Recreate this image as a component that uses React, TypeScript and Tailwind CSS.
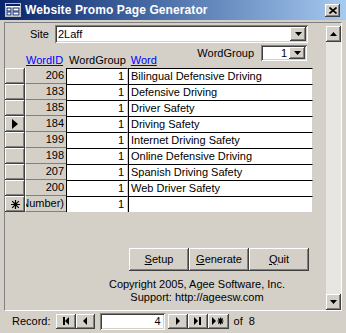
import React from "react";

const raised =
  "shadow-[inset_-1px_-1px_#404040,inset_1px_1px_#ffffff,inset_-2px_-2px_#808080,inset_2px_2px_#d4d0c8]";
const sunken =
  "shadow-[inset_1px_1px_#808080,inset_-1px_-1px_#ffffff,inset_2px_2px_#404040,inset_-2px_-2px_#d4d0c8]";

const rows = [
  { id: "206", word: "Bilingual Defensive Driving" },
  { id: "183", word: "Defensive Driving" },
  { id: "185", word: "Driver Safety" },
  { id: "184", word: "Driving Safety", current: true },
  { id: "199", word: "Internet Driving Safety" },
  { id: "198", word: "Online Defensive Driving" },
  { id: "207", word: "Spanish Driving Safety" },
  { id: "200", word: "Web Driver Safety" },
];

function DownArrow() {
  return (
    <svg width="7" height="4" viewBox="0 0 7 4">
      <path d="M0 0H7L3.5 4Z" fill="#000" />
    </svg>
  );
}

function NavBtn({ kind, w }: { kind: string; w: string }) {
  return (
    <div className={`${w} h-[15px] bg-[#d4d0c8] ${raised} flex items-center justify-center`}>
      <svg width="12" height="8" viewBox="0 0 12 8">
        {kind === "first" && (
          <>
            <rect x="3" y="0" width="2" height="8" fill="#000" />
            <path d="M9 0V8L5 4Z" fill="#000" />
          </>
        )}
        {kind === "prev" && <path d="M8 0V8L4 4Z" fill="#000" />}
        {kind === "next" && <path d="M4 0V8L8 4Z" fill="#000" />}
        {kind === "last" && (
          <>
            <path d="M2 0V8L6 4Z" fill="#000" />
            <rect x="7" y="0" width="2" height="8" fill="#000" />
          </>
        )}
        {kind === "new" && (
          <>
            <path d="M0 0V8L4 4Z" fill="#000" />
            <path d="M8.5 0.5V7.5M5.5 4H11.5M6.3 1.5L10.7 6.5M10.7 1.5L6.3 6.5" stroke="#000" strokeWidth="1.2" />
          </>
        )}
      </svg>
    </div>
  );
}

export default function App() {
  return (
    <div
      className="w-[346px] h-[333px] bg-[#d4d0c8] text-black text-[11px] leading-none overflow-hidden flex flex-col"
      style={{ fontFamily: '"Liberation Sans", Arial, sans-serif' }}
    >
      {/* title bar */}
      <div className="h-[20px] shrink-0 bg-gradient-to-r from-[#0a246a] to-[#a6caf0] flex items-center pl-[5px] pr-[6px]">
        <svg width="16" height="14" viewBox="0 0 16 14" className="shrink-0">
          <rect x="0.5" y="0.5" width="15" height="13" fill="#fff" stroke="#c0c0c0" />
          <rect x="1" y="1" width="14" height="2" fill="#0a246a" />
          <rect x="2" y="5" width="4" height="3" fill="#fff" stroke="#0a246a" />
          <rect x="2" y="9" width="4" height="3" fill="#fff" stroke="#0a246a" />
          <rect x="8" y="5" width="6" height="3" fill="#fff" stroke="#0a246a" />
          <rect x="8" y="9" width="6" height="3" fill="#fff" stroke="#0a246a" />
        </svg>
        <div className="ml-[4px] text-white font-bold text-[12px] whitespace-nowrap tracking-[0.1px]">
          Website Promo Page Generator
        </div>
        <div className="flex-1" />
        <div className={`w-[15px] h-[13px] bg-[#d4d0c8] ${raised} flex items-center justify-center`}>
          <svg width="8" height="7" viewBox="0 0 8 7">
            <path d="M0.5 0.5L7.5 6.5M7.5 0.5L0.5 6.5" stroke="#000" strokeWidth="1.6" />
          </svg>
        </div>
      </div>

      {/* body */}
      <div className="flex-1 flex flex-col px-[4px] pt-[2px]">
        <div className="h-[289px] shrink-0 flex border-t border-l border-[#808080] border-r border-r-white border-b border-b-white">
          {/* form */}
          <div className="flex-1 flex flex-col">
            {/* site row */}
            <div className="flex items-center h-[18px] mt-[2px]">
              <div className="w-[44px] text-right pr-[0px]">Site</div>
              <div className={`ml-[6px] w-[253px] h-[18px] bg-white ${sunken} flex items-center pl-[3px] pr-[2px]`}>
                <span className="flex-1">2Laff</span>
                <div className={`w-[16px] h-[14px] bg-[#d4d0c8] ${raised} flex items-center justify-center`}>
                  <DownArrow />
                </div>
              </div>
            </div>
            {/* header row */}
            <div className="flex h-[25px] relative">
              <div className="flex items-end pb-[2px] w-full">
                <span className="ml-[21px] text-[#0000ff] underline">WordID</span>
                <span className="ml-[6px]">WordGroup</span>
                <span className="ml-[5px] text-[#0000ff] underline">Word</span>
              </div>
              <div className="absolute left-[192px] top-[2px] flex items-center">
                <span className="w-[57px] text-right">WordGroup</span>
                <div className={`ml-[7px] w-[46px] h-[16px] bg-white ${sunken} flex items-center pl-[3px] pr-[2px]`}>
                  <span className="flex-1 text-right pr-[2px]">1</span>
                  <div className={`w-[16px] h-[12px] bg-[#d4d0c8] ${raised} flex items-center justify-center`}>
                    <DownArrow />
                  </div>
                </div>
              </div>
            </div>
            {/* grid */}
            <div className="flex flex-col">
              {[...rows, { id: "(AutoNumber)", word: "", isNew: true } as any].map((r, i) => (
                <div key={i} className="flex h-[16px]">
                  <div className={`w-[20px] bg-[#d4d0c8] ${raised} flex items-center justify-center`}>
                    {r.current && (
                      <svg width="6" height="10" viewBox="0 0 6 10">
                        <path d="M0 0V10L6 5Z" fill="#000" />
                      </svg>
                    )}
                    {r.isNew && (
                      <svg width="9" height="9" viewBox="0 0 9 9">
                        <path d="M4.5 0V9M0 4.5H9M1.2 1.2L7.8 7.8M7.8 1.2L1.2 7.8" stroke="#000" strokeWidth="1.2" />
                      </svg>
                    )}
                  </div>
                  <div className="w-[41px] bg-[#d4d0c8] border-l border-l-white border-b border-b-[#808080] flex items-center justify-end pr-[2px] overflow-hidden whitespace-nowrap">
                    <span className="shrink-0">{r.id}</span>
                  </div>
                  <div className="w-[62px] bg-white border-t border-l border-black border-r border-r-[#d4d0c8] flex items-center justify-end pr-[3px]">
                    1
                  </div>
                  <div className="w-[185px] bg-white border-t border-l border-black border-r border-r-[#d4d0c8] flex items-center pl-[2px] whitespace-nowrap">
                    {r.word}
                  </div>
                </div>
              ))}
            </div>
            {/* buttons */}
            <div className="flex mt-[36px] ml-[124px]">
              <div className={`w-[60px] h-[23px] bg-[#d4d0c8] ${raised} flex items-center justify-center`}>
                <span><u>S</u>etup</span>
              </div>
              <div className={`w-[60px] h-[23px] bg-[#d4d0c8] ${raised} flex items-center justify-center`}>
                <span><u>G</u>enerate</span>
              </div>
              <div className={`w-[60px] h-[23px] bg-[#d4d0c8] ${raised} flex items-center justify-center`}>
                <span><u>Q</u>uit</span>
              </div>
            </div>
            <div className="ml-[72px] w-[240px] text-center mt-[7px] leading-[13px]">
              <div>Copyright 2005, Agee Software, Inc.</div>
              <div>Support: http://ageesw.com</div>
            </div>
          </div>
          {/* scrollbar */}
          <div className="w-[15px] mt-[3px] mb-0 flex flex-col bg-[#e8e6e2]">
            <div className={`h-[16px] bg-[#d4d0c8] ${raised} flex items-center justify-center`}>
              <svg width="7" height="4" viewBox="0 0 7 4">
                <path d="M0 4H7L3.5 0Z" fill="#000" />
              </svg>
            </div>
            <div className="flex-1" />
            <div className={`h-[16px] bg-[#d4d0c8] ${raised} flex items-center justify-center`}>
              <DownArrow />
            </div>
          </div>
        </div>
        {/* record nav */}
        <div className="h-[20px] flex items-center">
          <span className="ml-[8px]">Record:</span>
          <div className="ml-[5px] flex">
            <NavBtn kind="first" w="w-[20px]" />
            <NavBtn kind="prev" w="w-[19px]" />
          </div>
          <div className={`ml-[5px] w-[65px] h-[17px] bg-white ${sunken} flex items-center justify-end pr-[4px]`}>
            4
          </div>
          <div className="ml-[3px] flex">
            <NavBtn kind="next" w="w-[20px]" />
            <NavBtn kind="last" w="w-[20px]" />
            <NavBtn kind="new" w="w-[21px]" />
          </div>
          <span className="ml-[5px]">of&nbsp;&nbsp;8</span>
        </div>
      </div>
    </div>
  );
}
